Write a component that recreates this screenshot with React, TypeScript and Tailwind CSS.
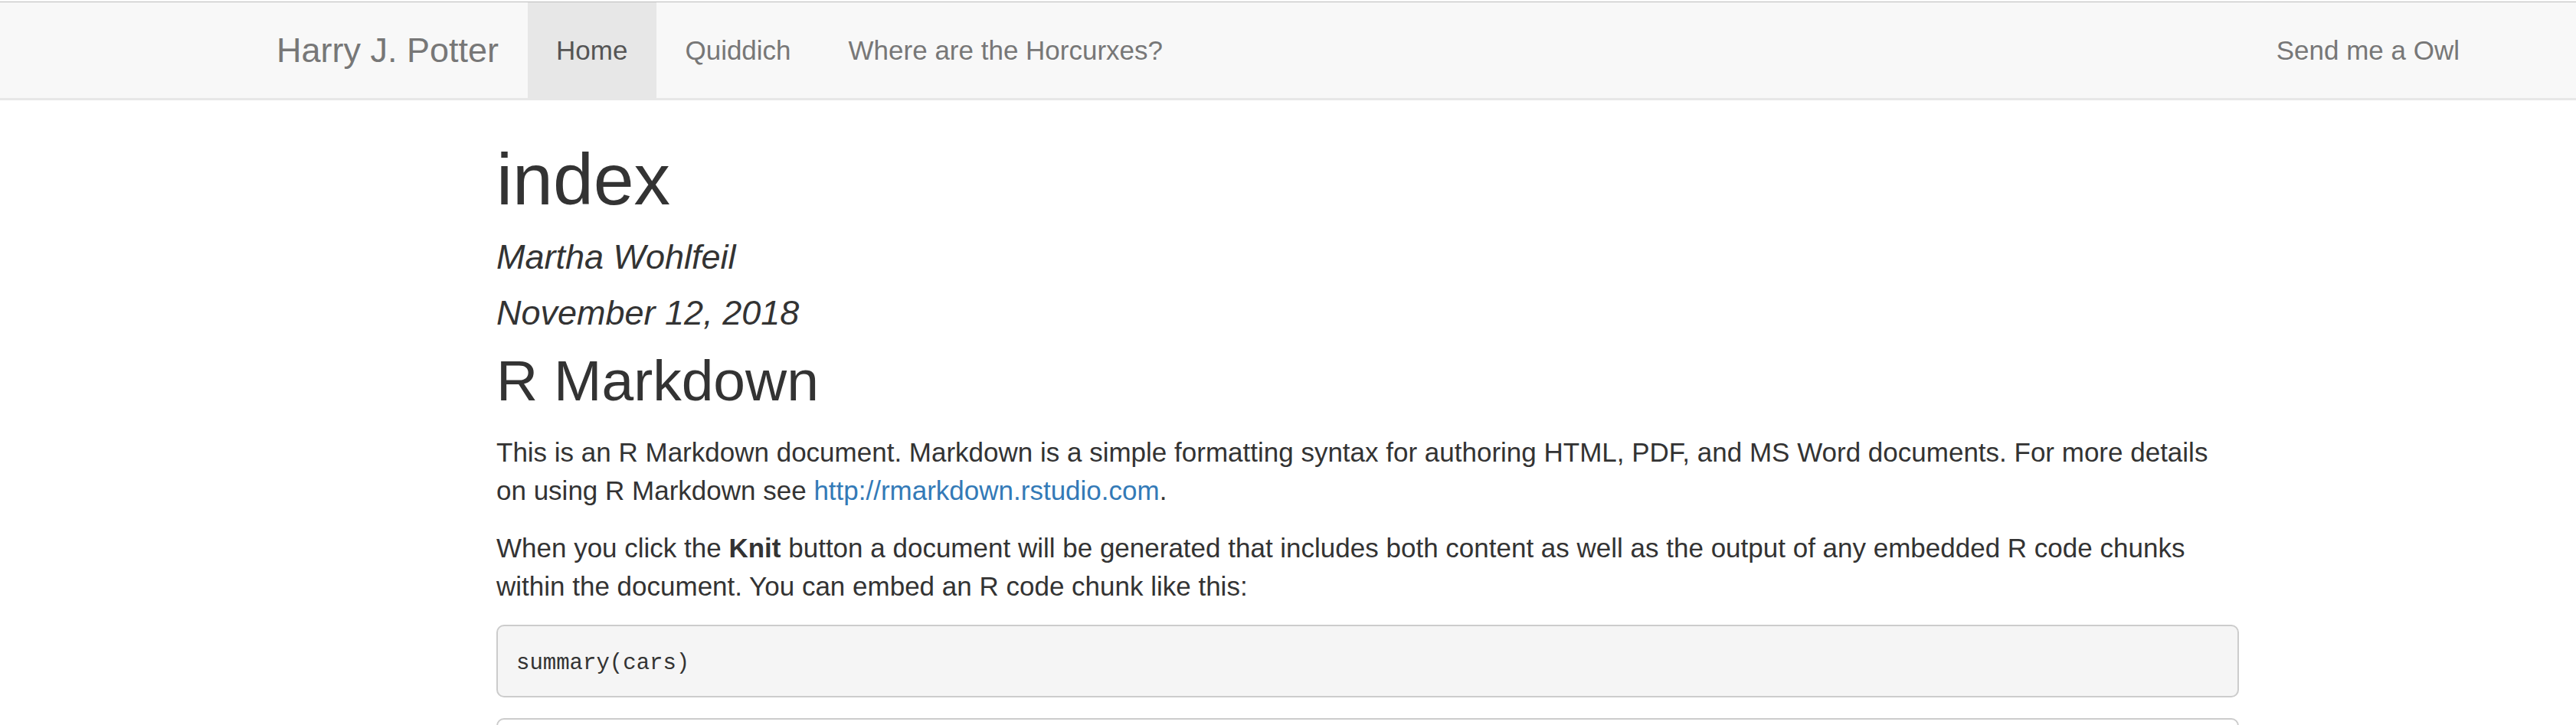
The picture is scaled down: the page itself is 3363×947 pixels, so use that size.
import React from "react";

const navLinks = [
  { label: "Home", active: true },
  { label: "Quiddich", active: false },
  { label: "Where are the Horcurxes?", active: false },
];

const Navbar = () => {
  return (
    <div className="mt-[2px] border-t border-[#bcbcbc] bg-[#f8f8f8] border-b-[3px] border-b-[#e7e7e7]">
      <div className="ml-[323.5px] w-[2925px] flex h-[125px]">
        <a className="px-[37.5px] py-[37.5px] text-[45px] leading-[50px] text-[#777777]">
          Harry J. Potter
        </a>
        <ul className="flex">
          {navLinks.map((link) => (
            <li key={link.label}>
              <a
                className={
                  link.active
                    ? "block px-[37.5px] py-[37.5px] text-[35px] leading-[50px] text-[#555555] bg-[#e7e7e7]"
                    : "block px-[37.5px] py-[37.5px] text-[35px] leading-[50px] text-[#777777]"
                }
              >
                {link.label}
              </a>
            </li>
          ))}
        </ul>
        <ul className="flex ml-auto">
          <li>
            <a className="block px-[37.5px] py-[37.5px] text-[35px] leading-[50px] text-[#777777]">
              Send me a Owl
            </a>
          </li>
        </ul>
      </div>
    </div>
  );
};

const App = () => {
  return (
    <div
      className="min-h-screen bg-white overflow-hidden"
      style={{ fontFamily: '"Liberation Sans", Arial, sans-serif' }}
    >
      <Navbar />
      <main className="ml-[648px] w-[2275px] text-[#333333]">
        <h1 className="pt-[51px] text-[95px] leading-[104.5px] mb-[24px]">index</h1>
        <h4 className="italic text-[45px] leading-[49.5px] mb-[23.5px]">Martha Wohlfeil</h4>
        <h4 className="italic text-[45px] leading-[49.5px] mb-[23px]">November 12, 2018</h4>
        <h2 className="text-[75px] leading-[82.5px] mb-[27.5px]">R Markdown</h2>
        <p className="text-[35px] leading-[50px] mb-[25px]">
          This is an R Markdown document. Markdown is a simple formatting syntax for authoring
          HTML, PDF, and MS Word documents. For more details
          <br />
          on using R Markdown see{" "}
          <a className="text-[#337ab7]">http://rmarkdown.rstudio.com</a>.
        </p>
        <p className="text-[35px] leading-[50px] mb-[25px]">
          When you click the <strong className="font-bold">Knit</strong> button a document will be
          generated that includes both content as well as the output of any embedded R code chunks
          <br />
          within the document. You can embed an R code chunk like this:
        </p>
        <pre
          className="border-2 border-[#cccccc] rounded-[10px] bg-[#f5f5f5] px-[24px] pt-[26px] pb-[20px] text-[29px] leading-[45px] text-[#333333]"
          style={{ fontFamily: '"Liberation Mono", monospace' }}
        >
          summary(cars)
        </pre>
        {/* output block, only its top edge is in view */}
        <div className="mt-[27px] h-[95px] border-2 border-[#cccccc] rounded-[10px] bg-white" />
      </main>
    </div>
  );
};

export default App;
